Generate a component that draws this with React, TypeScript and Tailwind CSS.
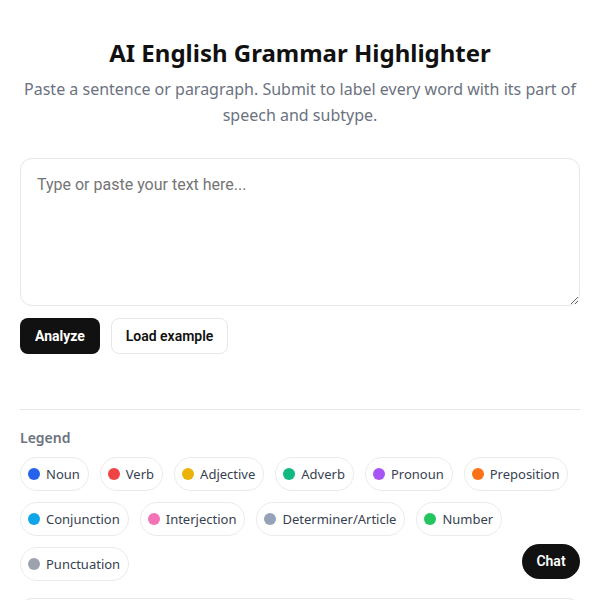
import React from "react";

const legend: { label: string; color: string }[] = [
  { label: "Noun", color: "bg-[#2563eb]" },
  { label: "Verb", color: "bg-[#ef4444]" },
  { label: "Adjective", color: "bg-[#eab308]" },
  { label: "Adverb", color: "bg-[#10b981]" },
  { label: "Pronoun", color: "bg-[#a855f7]" },
  { label: "Preposition", color: "bg-[#f97316]" },
  { label: "Conjunction", color: "bg-[#0ea5e9]" },
  { label: "Interjection", color: "bg-[#f472b6]" },
  { label: "Determiner/Article", color: "bg-[#94a3b8]" },
  { label: "Number", color: "bg-[#22c55e]" },
  { label: "Punctuation", color: "bg-[#9ca3af]" },
];

export default function App() {
  return (
    <div className="min-h-screen bg-white font-['Noto_Sans',sans-serif] text-[#111111]">
      <div className="mx-auto max-w-[600px] px-5 pt-[37px]">
        <h1 className="text-center text-[24px] font-bold leading-[32px] text-[#111111]">
          AI English Grammar Highlighter
        </h1>
        <p className="mt-[7px] text-center text-[16px] leading-[26px] text-[#6b7280]">
          Paste a sentence or paragraph. Submit to label every word with its part of speech and subtype.
        </p>

        <textarea
          className="mt-[30px] block h-[148px] w-full resize-y rounded-xl border border-[#e5e7eb] p-4 font-['Roboto',sans-serif] text-[16px] leading-[20px] text-[#111111] placeholder:text-[#757575] outline-none"
          placeholder="Type or paste your text here..."
        />

        <div className="mt-3 flex gap-[11px] font-['Roboto',sans-serif]">
          <button className="h-9 w-[80px] rounded-lg bg-[#111111] text-[14px] font-bold text-white">
            Analyze
          </button>
          <button className="h-9 w-[117px] rounded-lg border border-[#e5e7eb] bg-white text-[14px] font-semibold text-[#111111]">
            Load example
          </button>
        </div>

        <div className="mt-[55px] border-t border-[#e5e7eb] pt-[18px]">
          <div className="text-[14px] font-semibold leading-[20px] text-[#6b7280]">Legend</div>
          <div className="mt-[9px] flex flex-wrap gap-x-[11px] gap-y-[11px]">
            {legend.map((l) => (
              <div
                key={l.label}
                className="flex h-[34px] items-center gap-1.5 rounded-full border border-[#ebebeb] bg-white pl-[7px] pr-[8px] text-[13px] leading-[20px] text-[#374151]"
              >
                <span className={`inline-block h-3 w-3 shrink-0 rounded-full ${l.color}`} />
                <span className="whitespace-nowrap">{l.label}</span>
              </div>
            ))}
          </div>
        </div>

        <div className="mt-[17px] h-[120px] rounded-xl border border-[#e5e7eb]" />
      </div>

      <button className="fixed bottom-[21px] right-5 h-[35px] w-[58px] rounded-full bg-[#111111] font-['Roboto',sans-serif] text-[14px] font-semibold text-white">
        Chat
      </button>
    </div>
  );
}
